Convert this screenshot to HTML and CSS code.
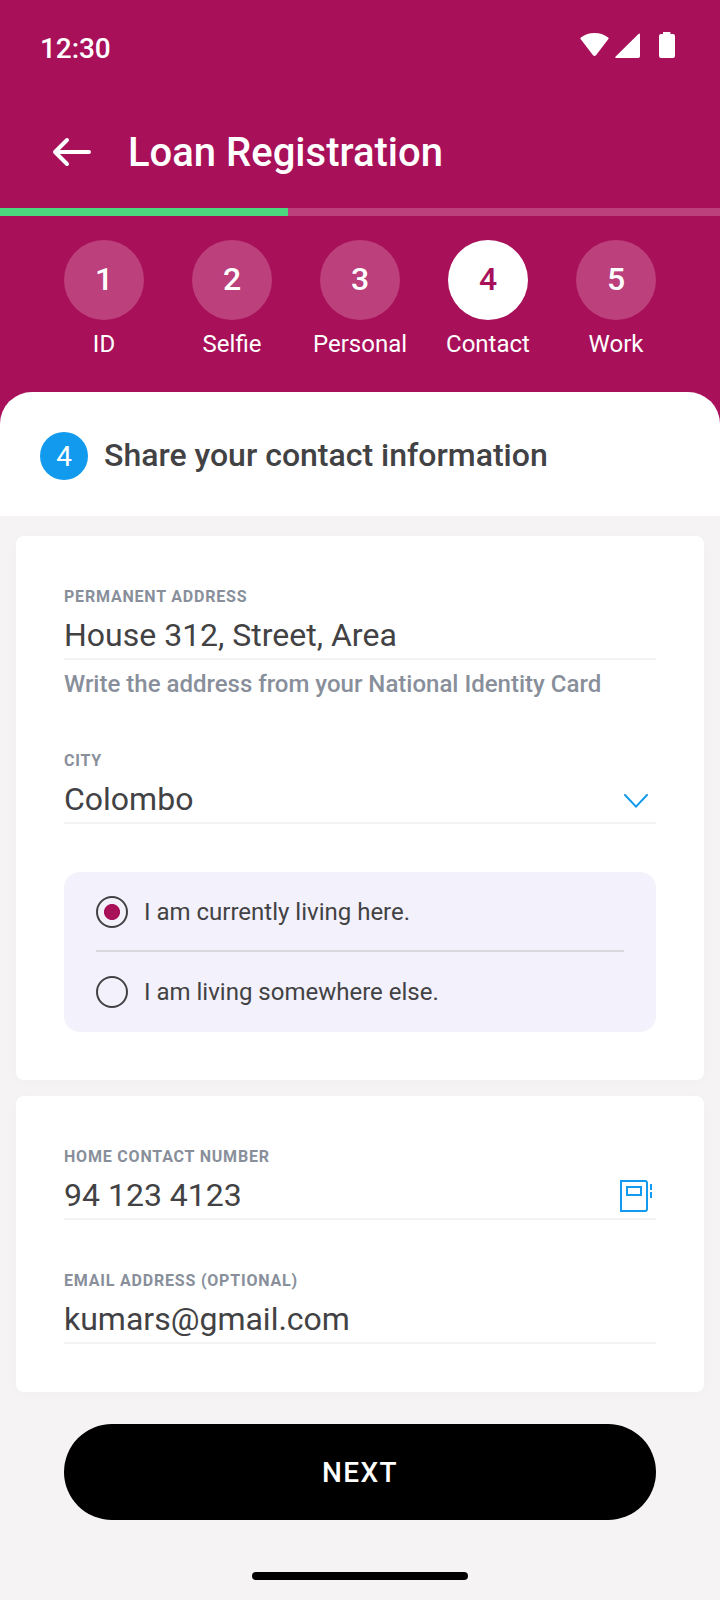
FILE: index.html
```html
<!DOCTYPE html>
<html lang="en">
<head>
<meta charset="utf-8">
<title>Loan Registration</title>
<link rel="stylesheet" href="styles.css">
</head>
<body>
<div class="screen">
  <header class="header">
    <div class="status">
      <span class="time">12:30</span>
      <svg class="status-icons" width="96" height="28" viewBox="0 0 96 28" fill="#fff">
        <path d="M.8 7.3Q-.2 6.3.9 5.4Q7 1 14.5 1T28.1 5.4Q29.2 6.3 28.2 7.3L16 23.2Q14.5 24.8 13 23.2Z"/>
        <path d="M58.2 2.3Q60 .4 60 2.7V24.2Q60 26 58.2 26H36.8Q34.2 26 35.9 24.2Z"/>
        <path d="M83 0h7.4v2H93q2 0 2 2v20q0 2-2 2H81q-2 0-2-2V4q0-2 2-2h2z"/>
      </svg>
    </div>
    <div class="titlebar">
      <svg class="back" width="40" height="32" viewBox="0 0 40 32" fill="none" stroke="#fff" stroke-width="4" stroke-linecap="round" stroke-linejoin="round"><path d="M37 16H3M15 4L3 16L15 28"/></svg>
      <h1 class="title">Loan Registration</h1>
    </div>
    <div class="progress"><div class="progress-fill" style="width:40%"></div></div>
    <nav class="steps">
      <div class="step"><span class="num">1</span><span class="name">ID</span></div>
      <div class="step"><span class="num">2</span><span class="name">Selfie</span></div>
      <div class="step"><span class="num">3</span><span class="name">Personal</span></div>
      <div class="step"><span class="num current">4</span><span class="name">Contact</span></div>
      <div class="step"><span class="num">5</span><span class="name">Work</span></div>
    </nav>
    <div class="section"><span class="badge">4</span><h2 class="section-title">Share your contact information</h2></div>
  </header>
  <main class="cards">
    <section class="card">
      <div class="field">
        <div class="label">PERMANENT ADDRESS</div>
        <div class="value">House 312, Street, Area</div>
      </div>
      <p class="hint">Write the address from your National Identity Card</p>
      <div class="field city">
        <div class="label">CITY</div>
        <div class="value">Colombo
          <svg class="chevron" width="24" height="14" viewBox="0 0 24 14" fill="none" stroke="#129bee" stroke-width="2" stroke-linecap="round"><path d="M1 1L12 12.6L23 1"/></svg>
        </div>
      </div>
      <div class="choices">
        <div class="choice"><span class="radio checked"></span><span class="choice-text">I am currently living here.</span></div>
        <div class="choice"><span class="radio"></span><span class="choice-text">I am living somewhere else.</span></div>
      </div>
    </section>
    <section class="card contact">
      <div class="field">
        <div class="label">HOME CONTACT NUMBER</div>
        <div class="value">94 123 4123
          <svg class="book" width="32" height="32" viewBox="0 0 32 32" fill="none" stroke="#129bee" stroke-width="2"><path d="M1 1H25Q27 1 27 3V29Q27 31 25 31H1ZM7 7H21V15H7ZM31 4V10M31 12V18"/></svg>
        </div>
      </div>
      <div class="field email">
        <div class="label">EMAIL ADDRESS (OPTIONAL)</div>
        <div class="value">kumars@gmail.com</div>
      </div>
    </section>
  </main>
  <button class="next">NEXT</button>
  <div class="home"></div>
</div>
</body>
</html>
```
FILE: styles.css
```css
* { box-sizing: border-box; }
body {
  margin: 0;
  font-family: Roboto, "Liberation Sans", sans-serif;
  color: #424244;
  background: #f5f3f4;
}
h1, h2, p { margin: 0; font-weight: 500; }
svg { display: block; flex: none; }
.screen { width: 720px; height: 1600px; overflow: hidden; background: #f5f3f4; }

.header { height: 516px; background: #a8105a; color: #fff; }
.status {
  display: flex;
  justify-content: space-between;
  height: 96px;
  padding: 32px 44px 0 40px;
}
.time { font-size: 28px; font-weight: 500; line-height: 34px; letter-spacing: -0.1px; }
.titlebar { display: flex; align-items: center; height: 112px; padding-left: 52px; }
.title { margin-left: 36px; padding-top: 2px; font-size: 40px; line-height: 48px; }
.progress { height: 8px; background: #bb407b; }
.progress-fill { height: 8px; background: #4cd77e; }
.steps { display: flex; height: 176px; padding: 24px 40px 0; }
.step { display: flex; flex-direction: column; align-items: center; width: 128px; }
.num {
  width: 80px;
  height: 80px;
  border-radius: 50%;
  background: #bb407b;
  font-size: 32px;
  font-weight: 500;
  line-height: 78px;
  text-align: center;
}
.current { background: #fff; color: #a8105a; }
.name { margin-top: 8px; font-size: 24px; line-height: 32px; }
.section {
  display: flex;
  align-items: center;
  gap: 16px;
  height: 124px;
  padding: 3px 40px 0;
  background: #fff;
  border-radius: 32px 32px 0 0;
}
.badge {
  width: 48px;
  height: 48px;
  border-radius: 50%;
  background: #129bee;
  font-size: 28px;
  line-height: 50px;
  text-align: center;
}
.section-title { color: #424244; font-size: 32px; line-height: 46px; padding-bottom: 2px; }

.cards { display: flex; flex-direction: column; gap: 16px; padding: 20px 16px 0; }
.card {
  height: 544px;
  padding: 50px 48px 0;
  background: #fff;
  border-radius: 8px;
  box-shadow: 0 2px 16px rgba(80, 60, 70, 0.02);
}
.contact { height: 296px; }
.label {
  height: 20px;
  color: #888f9b;
  font-size: 16px;
  font-weight: 700;
  line-height: 22px;
  letter-spacing: 0.8px;
}
.value {
  display: flex;
  justify-content: space-between;
  height: 54px;
  padding-top: 9px;
  border-bottom: 2px solid #f4f3f4;
  font-size: 32px;
  line-height: 40px;
}
.hint { margin-top: 8px; color: #888f9b; font-size: 24px; line-height: 32px; }
.city { margin-top: 50px; }
.chevron { margin: 15px 8px 0 0; }
.book { margin: 5px 4px 0 0; }
.email { margin-top: 50px; }
.choices {
  height: 160px;
  margin-top: 48px;
  padding: 0 32px;
  border-radius: 16px;
  background: #f3f1fb;
}
.choice { display: flex; align-items: center; gap: 16px; height: 80px; }
.choice:first-child { border-bottom: 2px solid #dad6dd; padding-top: 2px; }
.radio { width: 32px; height: 32px; border: 2px solid #424244; border-radius: 50%; }
.checked { background: radial-gradient(circle, #a8105a 7.6px, transparent 8.4px); }
.choice-text { font-size: 24px; line-height: 32px; }

.next {
  display: block;
  width: 592px;
  height: 96px;
  margin: 32px auto 0;
  padding: 2px 0 0;
  border: 0;
  border-radius: 48px;
  background: #000;
  color: #fff;
  font: 500 28px/94px Roboto, "Liberation Sans", sans-serif;
  letter-spacing: 1.4px;
}
.home { width: 216px; height: 8px; margin: 52px auto 0; border-radius: 4px; background: #000; }
```
